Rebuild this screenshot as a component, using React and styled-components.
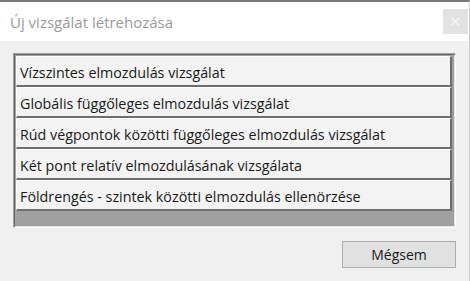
import React from 'react';
import styled, { createGlobalStyle } from 'styled-components';

const GlobalStyle = createGlobalStyle`
  html, body {
    margin: 0;
    padding: 0;
    background: #f0f0f0;
  }
  * {
    box-sizing: border-box;
  }
`;

const Window = styled.div`
  width: 470px;
  height: 281px;
  display: flex;
  flex-direction: column;
  border-top: 2px solid #7a7a7a;
  border-right: 1px solid #cfcfcf;
  background: #f0f0f0;
  font-family: 'Open Sans', 'Noto Sans', sans-serif;
  overflow: hidden;
`;

const TitleBar = styled.div`
  height: 39px;
  flex-shrink: 0;
  display: flex;
  align-items: center;
  justify-content: space-between;
  padding: 0 1px 0 10px;
  background: #fff;
`;

const Title = styled.span`
  font-size: 15px;
  color: #9a9a9a;
`;

const CloseButton = styled.div`
  width: 25px;
  height: 25px;
  background: #e2e2e2;
  color: #f4f4f4;
  display: flex;
  align-items: center;
  justify-content: center;
  font-size: 15px;
  line-height: 1;
`;

const Body = styled.div`
  flex: 1;
  display: flex;
  flex-direction: column;
  align-items: flex-start;
  padding: 12px 0 0 13px;
`;

const Panel = styled.div`
  width: 443px;
  height: 175px;
  display: flex;
  flex-direction: column;
  background: #a0a0a0;
  border-style: solid;
  border-width: 1px;
  border-color: #a0a0a0 #ffffff #ffffff #a0a0a0;
  box-shadow: inset 1px 1px 0 #696969, inset -1px -1px 0 #e3e3e3;
  padding: 2px;
`;

const Item = styled.div`
  height: 31px;
  flex-shrink: 0;
  display: flex;
  align-items: center;
  padding: 2px 0 0 3px;
  margin-right: 1px;
  background: #f3f3f3;
  border-style: solid;
  border-width: 1px 2px 2px 1px;
  border-color: #ffffff #6e6e6e #6e6e6e #ffffff;
  font-size: 14.3px;
  color: #1a1a1a;
  white-space: nowrap;
`;

const Footer = styled.div`
  width: 443px;
  display: flex;
  justify-content: flex-end;
  padding-top: 13px;
`;

const CancelButton = styled.button`
  width: 114px;
  height: 27px;
  background: #e1e1e1;
  border: 1px solid #adadad;
  font-family: 'Open Sans', 'Noto Sans', sans-serif;
  font-size: 14px;
  color: #1a1a1a;
  padding: 0;
`;

const items = [
  'Vízszintes elmozdulás vizsgálat',
  'Globális függőleges elmozdulás vizsgálat',
  'Rúd végpontok közötti függőleges elmozdulás vizsgálat',
  'Két pont relatív elmozdulásának vizsgálata',
  'Földrengés - szintek közötti elmozdulás ellenörzése',
];

export default function App() {
  return (
    <>
      <GlobalStyle />
      <Window>
        <TitleBar>
          <Title>Új vizsgálat létrehozása</Title>
          <CloseButton>✕</CloseButton>
        </TitleBar>
        <Body>
          <Panel>
            {items.map(text => (
              <Item key={text}>{text}</Item>
            ))}
          </Panel>
          <Footer>
            <CancelButton>Mégsem</CancelButton>
          </Footer>
        </Body>
      </Window>
    </>
  );
}
